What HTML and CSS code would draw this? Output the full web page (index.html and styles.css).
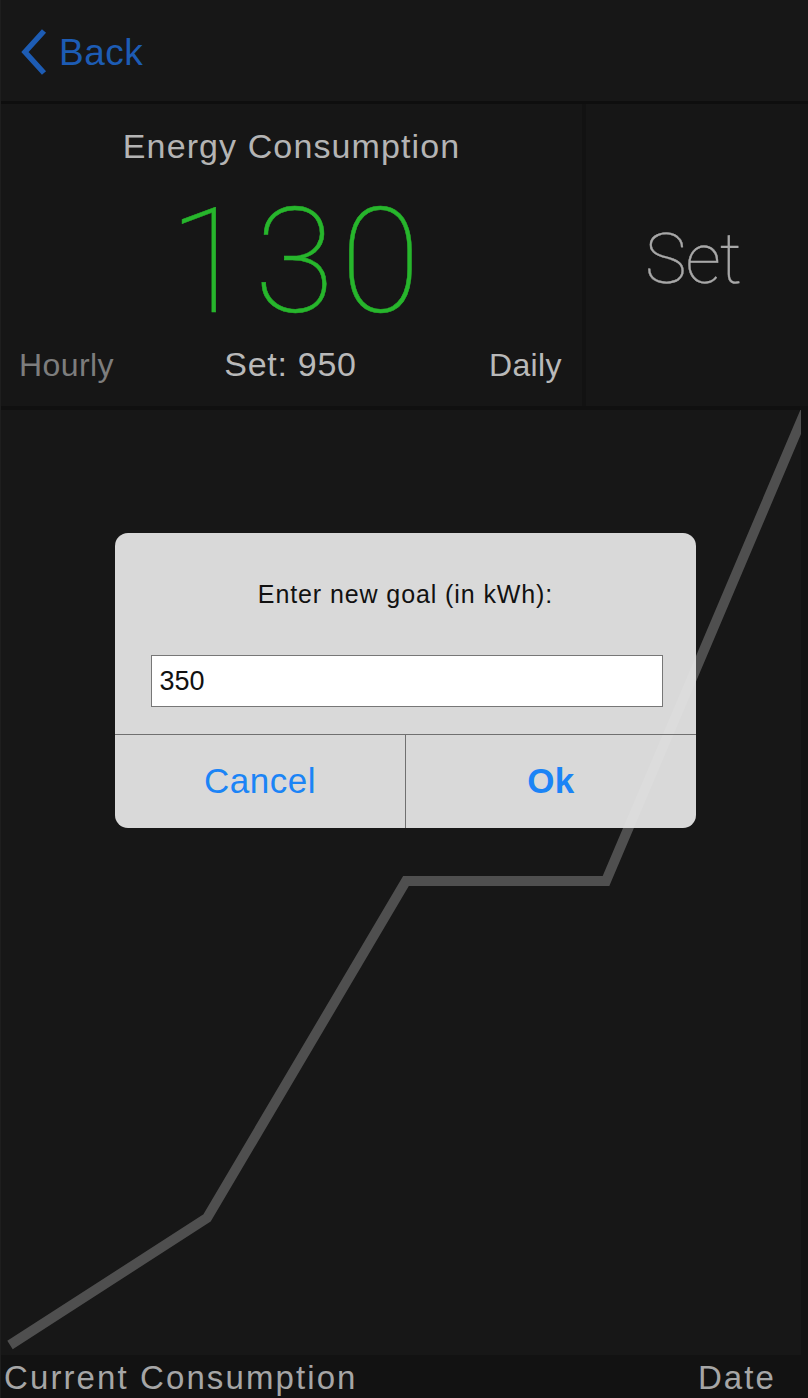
FILE: index.html
```html
<!DOCTYPE html>
<html>
<head>
<meta charset="utf-8">
<link rel="stylesheet" href="styles.css">
</head>
<body>
<div class="screen">
  <header class="nav">
    <a class="back">
      <svg class="chev" width="30" height="48" viewBox="0 0 30 48"><path d="M27 3 L8 24 L27 45" fill="none" stroke="#1d5cb4" stroke-width="5.5" stroke-linecap="butt" stroke-linejoin="miter"/></svg>
      <span>Back</span>
    </a>
  </header>
  <section class="top">
    <div class="meter">
      <div class="title">Energy Consumption</div>
      <div class="value">130</div>
      <div class="meta">
        <span class="hourly">Hourly</span>
        <span class="setval">Set: 950</span>
        <span class="daily">Daily</span>
      </div>
    </div>
    <div class="setbox">Set</div>
    <div class="edge"></div>
  </section>
  <section class="chart">
    <svg width="800" height="945" viewBox="0 0 800 945">
      <polyline points="9,935 206,808 405,471 605,471 809,-10" fill="none" stroke="#4f4f4f" stroke-width="10" stroke-linejoin="miter"/>
    </svg>
  </section>
  <footer class="foot">
    <span>Current Consumption</span>
    <span>Date</span>
  </footer>

  <div class="dialog">
    <div class="dbody">
      <div class="dtitle">Enter new goal (in kWh):</div>
      <div class="input">350</div>
    </div>
    <div class="buttons">
      <div class="btn cancel">Cancel</div>
      <div class="btn ok">Ok</div>
    </div>
  </div>
</div>
</body>
</html>
```
FILE: styles.css
```css
html, body {
  margin: 0;
  padding: 0;
  background: #121212;
}
.screen {
  position: relative;
  width: 808px;
  height: 1398px;
  overflow: hidden;
  background: #121212;
  font-family: "Liberation Sans", Arial, sans-serif;
  border-left: 1px solid #1e1e1e;
  box-sizing: border-box;
}
.nav {
  height: 101px;
  background: #171717;
  border-bottom: 3px solid #0e0e0e;
  display: flex;
  align-items: center;
}
.back {
  display: flex;
  align-items: center;
  margin-left: 16px;
  margin-top: 5px;
  color: #1d5cb4;
  font-size: 37px;
  letter-spacing: 0.5px;
}
.back span { margin-left: 12px; }
.chev { display: block; margin-top: -2px; }

.top {
  height: 302px;
  display: flex;
  border-bottom: 4px solid #101010;
}
.meter {
  width: 581px;
  background: #161616;
  display: flex;
  flex-direction: column;
  align-items: stretch;
}
.title {
  margin-top: 23px;
  font-size: 34px;
  line-height: 39px;
  letter-spacing: 1.1px;
  color: #b4b4b4;
  text-align: center;
}
.value {
  font-family: Roboto, "Liberation Sans", sans-serif;
  font-weight: 100;
  font-size: 146px;
  line-height: 146px;
  height: 146px;
  margin-top: 24px;
  text-align: center;
  padding-left: 12px;
  color: #27b62c;
  letter-spacing: 6px;
  -webkit-text-stroke: 0.5px #27b62c;
}
.meta {
  display: grid;
  grid-template-columns: 1fr auto 1fr;
  align-items: baseline;
  padding: 0 20px 0 18px;
  margin-top: 10px;
  font-size: 32px;
  line-height: 37px;
}
.hourly { color: #7d7d7d; letter-spacing: 0.4px; justify-self: start; }
.setval { color: #b9b9b9; font-size: 34px; letter-spacing: 0.7px; justify-self: center; }
.daily { color: #b9b9b9; letter-spacing: 0.4px; justify-self: end; }
.setbox {
  width: 214px;
  margin-left: 4px;
  background: #161616;
  display: flex;
  justify-content: center;
  align-items: center;
  padding-top: 8px;
  box-sizing: border-box;
  font-family: Roboto, "Liberation Sans", sans-serif;
  font-weight: 100;
  font-size: 70px;
  color: #a8a8a8;
  letter-spacing: -1px;
  -webkit-text-stroke: 0.4px #a8a8a8;
}
.edge {
  flex: 1;
  background: #141414;
}

.chart {
  height: 945px;
  width: 800px;
  background: #171717;
  overflow: hidden;
}
.chart svg { display: block; }

.foot {
  height: 43px;
  display: flex;
  justify-content: space-between;
  align-items: flex-end;
  padding: 0 32px 0 3px;
  font-size: 33px;
  letter-spacing: 2.1px;
  color: #a6a6a6;
  line-height: 40px;
  background: #121212;
}

.dialog {
  position: absolute;
  left: 114px;
  top: 533px;
  width: 581px;
  height: 295px;
  border-radius: 13px;
  background: rgba(228, 228, 228, 0.95);
  display: flex;
  flex-direction: column;
  overflow: hidden;
}
.dbody {
  height: 201px;
  border-bottom: 1px solid #707070;
  display: flex;
  flex-direction: column;
  align-items: center;
}
.dtitle {
  margin-top: 47px;
  font-size: 25px;
  line-height: 29px;
  letter-spacing: 0.9px;
  color: #111;
}
.input {
  margin-top: 46px;
  width: 512px;
  height: 52px;
  box-sizing: border-box;
  background: #fff;
  border: 1px solid #777;
  font-size: 27px;
  color: #111;
  line-height: 50px;
  padding-left: 8px;
  margin-left: 2px;
}
.buttons {
  flex: 1;
  display: grid;
  grid-template-columns: 291px 1fr;
}
.btn {
  display: flex;
  justify-content: center;
  align-items: center;
  color: #1b84f6;
  font-size: 35px;
  letter-spacing: 0.5px;
  padding-bottom: 2px;
}
.cancel {
  border-right: 1px solid #707070;
}
.ok { font-weight: bold; }
```
